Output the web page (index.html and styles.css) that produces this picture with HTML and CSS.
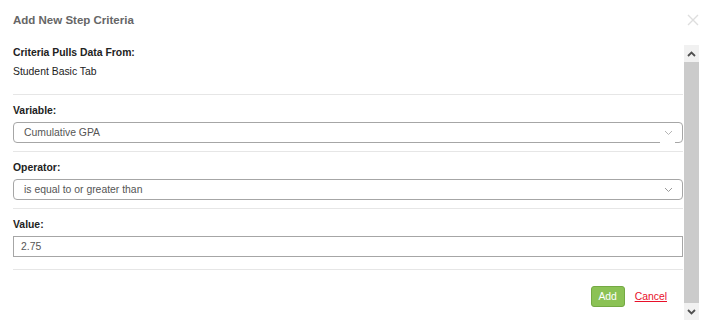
FILE: index.html
```html
<!DOCTYPE html>
<html>
<head>
<meta charset="utf-8">
<link rel="stylesheet" href="styles.css">
</head>
<body>
<div class="dialog">
  <div class="header">
    <div class="title">Add New Step Criteria</div>
    <div class="close">
      <svg width="12" height="12" viewBox="0 0 12 12"><path d="M1 1L11 11M11 1L1 11" stroke="#dedede" stroke-width="1.4" fill="none"/></svg>
    </div>
  </div>
  <div class="scrollwrap">
    <div class="content">
      <div class="label first">Criteria Pulls Data From:</div>
      <div class="plain">Student Basic Tab</div>
      <div class="sep sep-a"></div>

      <div class="label">Variable:</div>
      <div class="select gap-border">
        <span>Cumulative GPA</span>
        <svg class="chev" width="9" height="6" viewBox="0 0 9 6"><path d="M1 1L4.5 4.5L8 1" stroke="#b5b5b5" stroke-width="1" fill="none"/></svg>
      </div>
      <div class="sep"></div>

      <div class="label">Operator:</div>
      <div class="select">
        <span>is equal to or greater than</span>
        <svg class="chev" width="9" height="6" viewBox="0 0 9 6"><path d="M1 1L4.5 4.5L8 1" stroke="#9a9a9a" stroke-width="1" fill="none"/></svg>
      </div>
      <div class="sep"></div>

      <div class="label">Value:</div>
      <div class="input">2.75</div>
      <div class="sep sep-b"></div>

      <div class="actions">
        <button class="add">Add</button>
        <a class="cancel" href="#">Cancel</a>
      </div>
    </div>
    <div class="scrollbar">
      <div class="sb-btn">
        <svg width="9" height="6" viewBox="0 0 9 6"><path d="M1 5L4.5 1.5L8 5" stroke="#505050" stroke-width="1.8" fill="none"/></svg>
      </div>
      <div class="sb-thumb"></div>
      <div class="sb-btn">
        <svg width="9" height="6" viewBox="0 0 9 6"><path d="M1 1L4.5 4.5L8 1" stroke="#505050" stroke-width="1.8" fill="none"/></svg>
      </div>
    </div>
  </div>
</div>
</body>
</html>
```

FILE: styles.css
```css
html, body {
  margin: 0;
  padding: 0;
  background: #fff;
}
body {
  font-family: "Liberation Sans", Arial, sans-serif;
  font-size: 10.4px;
  color: #222;
}
.dialog {
  width: 704px;
  height: 325px;
  background: #fff;
}
.header {
  height: 45px;
  display: flex;
  align-items: center;
  justify-content: space-between;
  padding: 0 5px 6px 13px;
  box-sizing: border-box;
}
.title {
  font-size: 11.5px;
  font-weight: bold;
  color: #666;
}
.close {
  width: 12px;
  height: 12px;
  margin-right: 0;
  display: flex;
}
.scrollwrap {
  display: flex;
  height: 275px;
  margin-right: 5px;
}
.content {
  flex: 1;
  padding: 0 1px 0 13px;
}
.label {
  font-weight: bold;
  line-height: 14px;
  margin-top: 9px;
}
.label.first {
  margin-top: 1px;
}
.plain {
  line-height: 14px;
  margin-top: 5px;
}
.sep {
  height: 1px;
  background: #e6e6e6;
  margin-top: 8px;
}
.sep-a {
  margin-top: 15px;
}
.sep-b {
  margin-top: 12px;
}
.select {
  position: relative;
  margin-top: 4px;
  height: 21px;
  box-sizing: border-box;
  border: 1px solid #a6a6a6;
  border-radius: 4px;
  display: flex;
  align-items: center;
  justify-content: space-between;
  padding: 0 9px 0 10px;
  color: #555;
}
.gap-border::after {
  content: "";
  position: absolute;
  right: 7px;
  bottom: -1px;
  width: 15px;
  height: 1px;
  background: #fff;
}
.input {
  margin-top: 4px;
  height: 21px;
  box-sizing: border-box;
  border: 1px solid #a6a6a6;
  display: flex;
  align-items: center;
  padding-left: 7px;
  color: #555;
}
.actions {
  display: flex;
  justify-content: flex-end;
  align-items: center;
  margin-top: 16px;
  padding-right: 16px;
  gap: 10px;
}
.add {
  width: 34px;
  height: 21px;
  box-sizing: border-box;
  background: #8bc255;
  border: 1px solid #74a943;
  border-radius: 3px;
  color: #fff;
  font-family: "Liberation Sans", Arial, sans-serif;
  font-size: 10.4px;
  padding: 0;
}
.cancel {
  color: #e8102a;
  text-decoration: underline;
  font-size: 10.4px;
}
.scrollbar {
  width: 15px;
  display: flex;
  flex-direction: column;
}
.sb-btn {
  height: 17px;
  background: #f1f1f1;
  display: flex;
  align-items: center;
  justify-content: center;
}
.sb-thumb {
  flex: 1;
  background: #cbcbcb;
}
```
